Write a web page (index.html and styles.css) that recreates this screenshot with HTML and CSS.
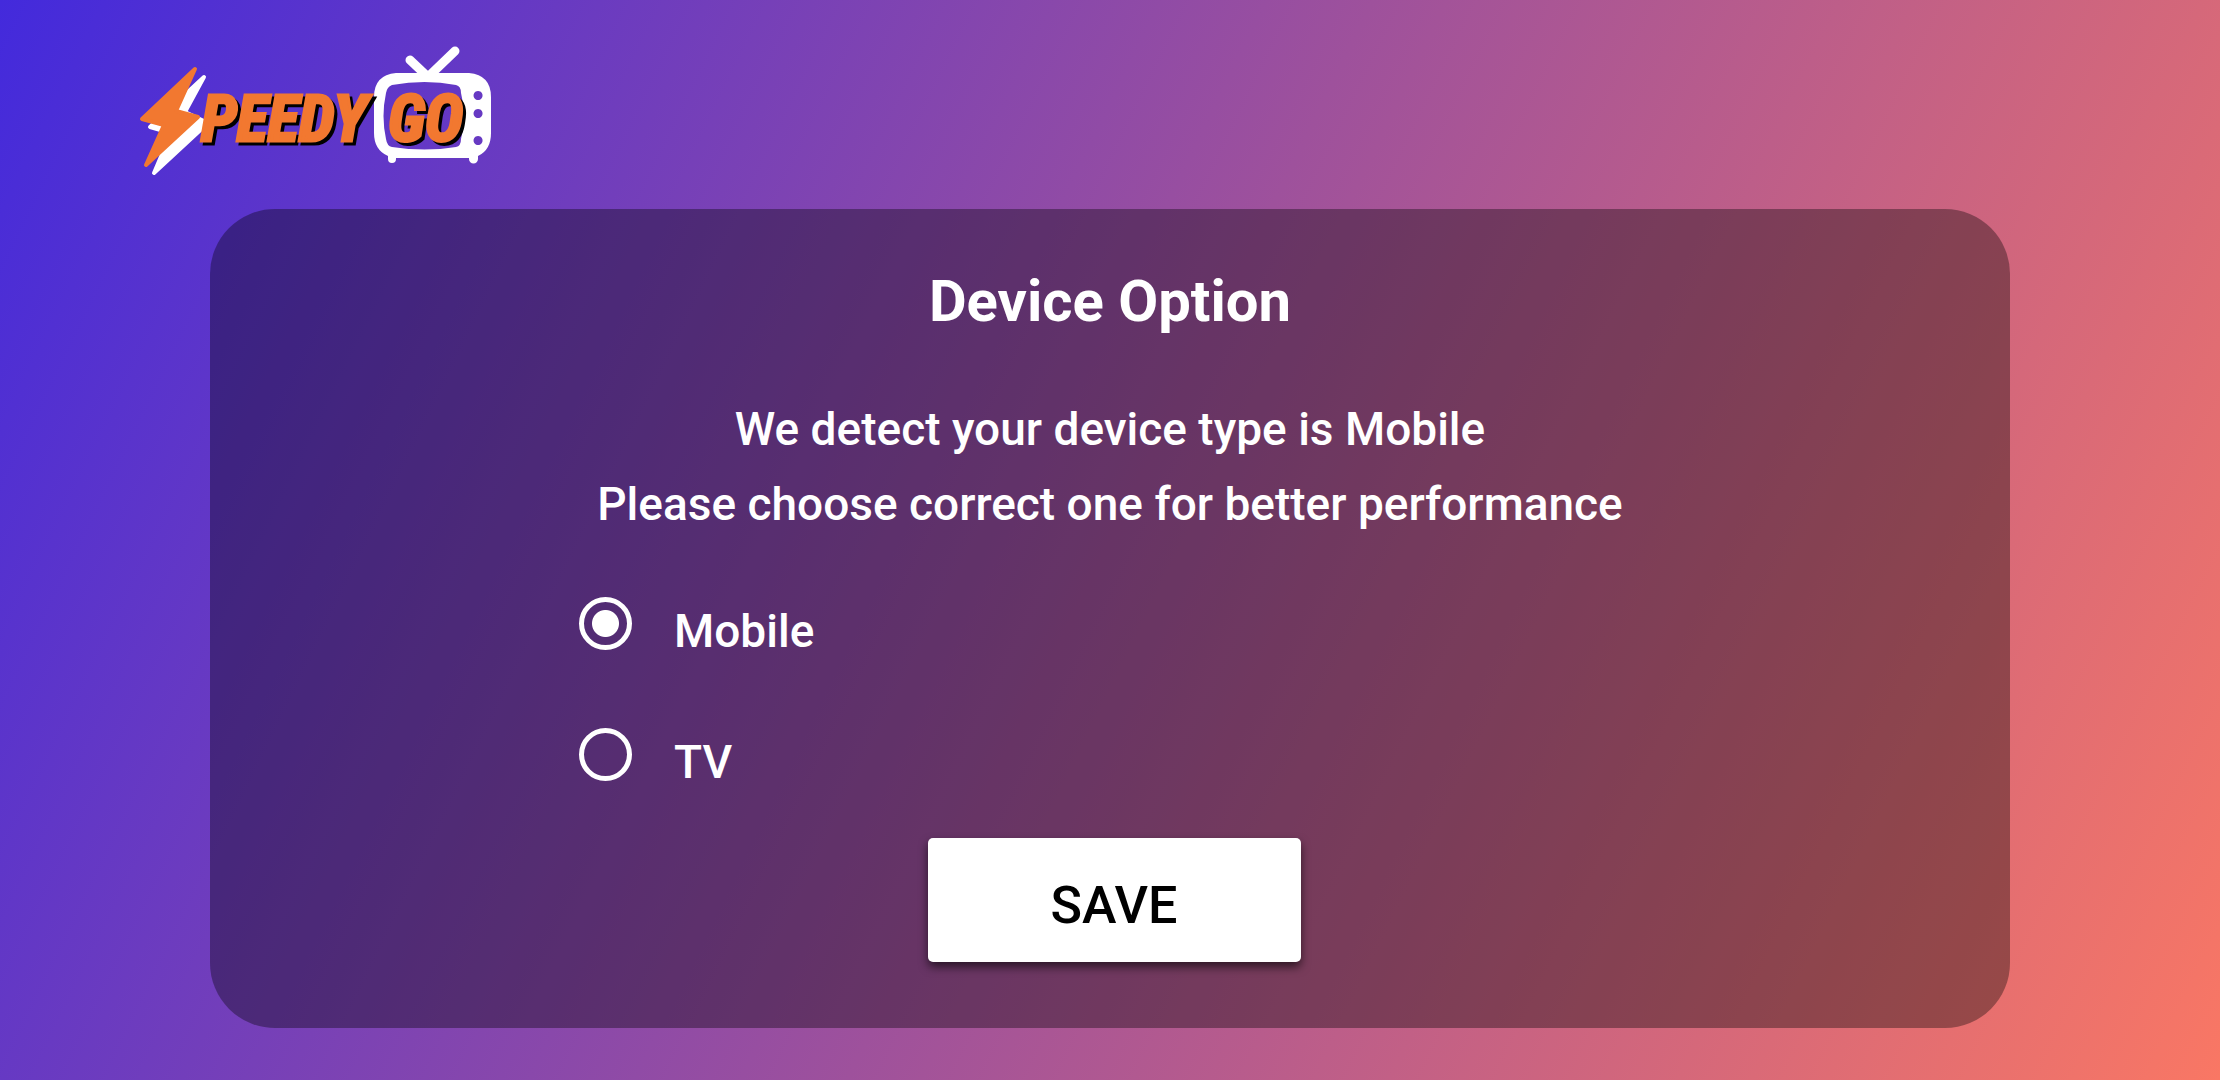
FILE: index.html
```html
<!doctype html>
<html lang="en">

<head>
<meta charset="utf-8">
<title>Speedy Go - Device Option</title>
<link rel="stylesheet" href="styles.css">
</head>

<body>

<header class="header">
	<svg class="logo" viewBox="0 0 356 134" role="img" aria-label="Speedy Go">
		<!-- lightning bolt -->
		<path class="white bolt" d="M66 34 L12 84 L33 90 L16 130 L70 80 L47 69Z"/>
		<path class="orange bolt" d="M57 26 L4 76 L26 82 L8 122 L60 74 L38 68Z"/>
		<!-- television -->
		<path class="antenna" d="M272 17 L290 34 L317 8"/>
		<path class="white" fill-rule="evenodd" d="M258 30H331Q353 32 353 54V90Q353 107 340 113V116A4 4 0 0 1 331 116V115H258V116A4 4 0 0 1 250 116V113Q236 107 236 90V54Q236 32 258 30Z M254 42Q249 44 248 50Q243 73 248 96Q249 103 254 104Q287 109 318 104Q323 103 323 96Q329 73 323 50Q323 43 318 42Q287 36 254 42Z M340 48a4.5 4.5 0 1 0 .1 0Z M340 66a4.5 4.5 0 1 0 .1 0Z M340 93a4.5 4.5 0 1 0 .1 0Z"/>
		<!-- wordmark -->
		<text class="word shadow" x="66" y="101">PEEDY</text>
		<text class="word shadow" x="253" y="101">GO</text>
		<text class="word" x="63" y="98">PEEDY</text>
		<text class="word" x="250" y="98">GO</text>
	</svg>
</header>

<main class="panel">
	<h1 class="title">Device Option</h1>
	<p class="message">We detect your device type is Mobile<br>Please choose correct one for better performance</p>
	<form class="options">
		<div class="option">
			<input type="radio" id="deviceMobile" name="device" value="mobile" checked>
			<label for="deviceMobile">Mobile</label>
		</div>
		<div class="option">
			<input type="radio" id="deviceTv" name="device" value="tv">
			<label for="deviceTv">TV</label>
		</div>
		<button type="submit" class="save">SAVE</button>
	</form>
</main>

</body>

</html>
```
FILE: styles.css
```css
* {
	box-sizing:border-box;
}
html,body {
	margin:0;
	min-height:100%;
}
body {
	min-height:100vh;
	font-family:Roboto, "Open Sans", sans-serif;
	font-weight:500;
	color:#fff;
	background:linear-gradient(116deg, #432adc, #9e519c 50%, #f97764);
}
.header {
	padding:43px 138px 0;
	height:209px;
}
.logo {
	display:block;
	width:356px;
}
.logo .white {fill:#fff;}
.logo .orange {fill:#f27830;}
.logo .bolt {
	stroke:#fff;
	stroke-width:4px;
	stroke-linejoin:round;
}
.logo .orange.bolt {stroke:#f27830;}
.logo .antenna {
	fill:none;
	stroke:#fff;
	stroke-width:9px;
	stroke-linecap:round;
	stroke-linejoin:round;
}
.logo .word {
	font-family:"Liberation Sans Narrow", "Roboto Condensed", sans-serif;
	font-size:65px;
	font-weight:bold;
	font-style:italic;
	fill:#f27830;
	stroke:#f27830;
	stroke-width:3px;
}
.logo .shadow {
	fill:#000;
	stroke:#000;
}
.panel {
	display:flex;
	flex-direction:column;
	align-items:center;
	margin:0 210px;
	padding:56px 40px 66px;
	border-radius:65px;
	background:rgba(0,0,0,0.35);
}
.title {
	margin:0;
	font-size:58px;
	line-height:72px;
	font-weight:bold;
}
.message {
	margin:55px 0 0;
	font-size:46px;
	line-height:75px;
	text-align:center;
}
.options {
	display:flex;
	flex-direction:column;
	width:100%;
	max-width:1062px;
	padding-top:16px;
}
.option {
	display:flex;
	align-items:center;
	gap:42px;
	height:131px;
	font-size:46px;
}
.option input {
	appearance:none;
	width:53px;
	height:53px;
	margin:0;
	border:5px solid #fff;
	border-radius:50%;
}
.option input:checked {
	background:radial-gradient(circle, #fff 13px, transparent 14px);
}
.option label {
	padding-top:14px;
}
.save {
	align-self:center;
	margin:18px 0 0 8px;
	width:373px;
	height:124px;
	padding:11px 0 0;
	border:0;
	border-radius:5px;
	background:#fff;
	color:#000;
	font-family:inherit;
	font-size:52px;
	font-weight:500;
	box-shadow:0 5px 10px rgba(0,0,0,0.6);
}
```
